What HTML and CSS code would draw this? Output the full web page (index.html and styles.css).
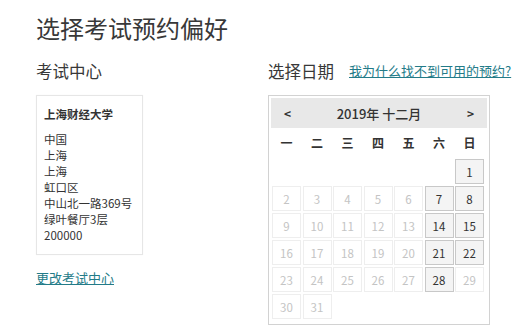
FILE: index.html
```html
<!DOCTYPE html>
<html lang="zh-CN">
<head>
  <meta charset="UTF-8" />
  <meta name="viewport" content="width=device-width, initial-scale=1.0"/>
  <title>选择考试预约偏好</title>
  <link rel="stylesheet" href="styles.css">
</head>
<body>
  <div class="page">
    <h1 class="page-title">选择考试预约偏好</h1>

    <div class="columns">
      <div class="col-center">
        <h2 class="section-title">考试中心</h2>
        <div class="center-card">
          <div class="center-name">上海财经大学</div>
          <div class="center-address">
            <div>中国</div>
            <div>上海</div>
            <div>上海</div>
            <div>虹口区</div>
            <div>中山北一路369号</div>
            <div>绿叶餐厅3层</div>
            <div>200000</div>
          </div>
        </div>
        <a href="#" class="link change-link">更改考试中心</a>
      </div>

      <div class="col-date">
        <div class="date-head">
          <h2 class="section-title">选择日期</h2>
          <a href="#" class="link help-link">我为什么找不到可用的预约?</a>
        </div>

        <div class="calendar">
          <div class="cal-header">
            <span class="cal-nav">&lt;</span>
            <span class="cal-month">2019年 十二月</span>
            <span class="cal-nav">&gt;</span>
          </div>
          <div class="cal-weekdays">
            <span>一</span><span>二</span><span>三</span><span>四</span><span>五</span><span>六</span><span>日</span>
          </div>
          <div class="cal-days" id="cal-days"></div>
        </div>
      </div>
    </div>
  </div>

  <script>
    // December 2019 starts on a Sunday (column 7)
    var open = [1, 7, 8, 14, 15, 21, 22, 28];
    var grid = document.getElementById("cal-days");
    for (var i = 0; i < 6; i++) {
      var blank = document.createElement("span");
      blank.className = "day empty";
      grid.appendChild(blank);
    }
    for (var d = 1; d <= 31; d++) {
      var cell = document.createElement("span");
      cell.className = open.indexOf(d) >= 0 ? "day open" : "day off";
      cell.textContent = d;
      grid.appendChild(cell);
    }
  </script>
</body>
</html>
```

FILE: styles.css
```css
body {
  margin: 0;
  background-color: #ffffff;
  color: #333333;
  font-family: "Noto Sans CJK SC", "Noto Sans", sans-serif;
}
.page {
  padding: 14px 0 0 36px;
}
.page-title {
  margin: 0;
  font-size: 24px;
  font-weight: normal;
  line-height: 28px;
  color: #383838;
}
.columns {
  display: flex;
  margin-top: 18px;
}
.col-center {
  width: 232px;
}
.section-title {
  margin: 0;
  font-size: 16.5px;
  font-weight: normal;
  line-height: 22px;
  color: #383838;
}
.link {
  color: #237b88;
  text-decoration: underline;
}
.center-card {
  box-sizing: border-box;
  width: 107px;
  height: 160px;
  margin-top: 13px;
  padding: 10px 4px 0 7px;
  border: 1px solid #e6e6e6;
  box-shadow: 0 0 1px rgba(0,0,0,0.05);
}
.center-name {
  font-size: 11.5px;
  font-weight: bold;
  line-height: 16px;
  white-space: nowrap;
}
.center-address {
  margin-top: 9px;
  font-size: 11.5px;
  line-height: 16px;
  white-space: nowrap;
}
.change-link {
  display: inline-block;
  margin-top: 14px;
  font-size: 13px;
  line-height: 17px;
}
.date-head {
  display: flex;
  align-items: center;
  gap: 15px;
}
.help-link {
  font-size: 13px;
  line-height: 22px;
}
.calendar {
  box-sizing: border-box;
  width: 222px;
  margin-top: 13px;
  padding: 2px 2px 5px 2px;
  border: 1px solid #d2d2d2;
}
.cal-header {
  display: flex;
  align-items: center;
  justify-content: space-between;
  height: 30px;
  padding: 0 13px;
  background-color: #e8e8e8;
  font-size: 13px;
}
.cal-nav {
  font-weight: bold;
  font-size: 12px;
}
.cal-month {
  font-weight: 500;
}
.cal-weekdays {
  display: grid;
  grid-template-columns: repeat(7, 29px);
  column-gap: 1.5px;
  height: 29px;
  padding: 0 1px;
  align-items: center;
  text-align: center;
  font-size: 12px;
  font-weight: bold;
}
.cal-days {
  display: grid;
  grid-template-columns: repeat(7, 29px);
  grid-auto-rows: 25px;
  column-gap: 1.5px;
  row-gap: 2px;
  margin-top: 2px;
  padding: 0 1px;
}
.day {
  box-sizing: border-box;
  display: flex;
  align-items: center;
  justify-content: center;
  font-size: 11.5px;
}
.day.off {
  border: 1px solid #eeeeee;
  color: #c4c4c4;
}
.day.open {
  border: 1px solid #c8c8c8;
  background-color: #f4f4f4;
  color: #333333;
}
```
